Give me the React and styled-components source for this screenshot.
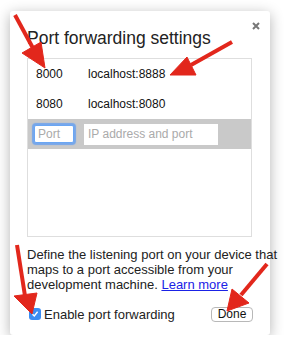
import React from 'react';
import styled, { createGlobalStyle } from 'styled-components';

const GlobalStyle = createGlobalStyle`
  html, body {
    margin: 0;
    background: #ffffff;
  }
  body {
    font-family: "Liberation Sans", Arial, sans-serif;
    color: #222;
  }
`;

const Dialog = styled.div`
  position: relative;
  box-sizing: border-box;
  width: 260px;
  height: 324px;
  margin: 11px 0 0 10px;
  padding: 0 18px 0 17px;
  background: #fff;
  border-radius: 3px;
  box-shadow: 0 3px 14px rgba(0, 0, 0, 0.3);
  display: flex;
  flex-direction: column;
`;

const Header = styled.div`
  display: flex;
  justify-content: space-between;
  align-items: flex-start;
  height: 47px;
`;

const Title = styled.h1`
  margin: 16px 0 0 0;
  font-size: 17.5px;
  line-height: 22px;
  font-weight: normal;
  color: #222;
`;

const CloseButton = styled.button`
  margin: 11px -8px 0 0;
  padding: 0;
  border: none;
  background: none;
  width: 8px;
  height: 8px;
  display: flex;
`;

const RuleList = styled.div`
  box-sizing: border-box;
  height: 179px;
  border: 1px solid #dedede;
  display: flex;
  flex-direction: column;
`;

const RuleRow = styled.div`
  display: grid;
  grid-template-columns: 52px 1fr;
  align-items: center;
  height: 30px;
  padding-left: 8px;
  font-size: 12px;
  color: #111;
`;

const EditRow = styled.div`
  display: flex;
  align-items: center;
  gap: 10px;
  height: 30px;
  padding-left: 6px;
  background: #c9c9c9;
`;

const Field = styled.input`
  box-sizing: border-box;
  width: ${({ $width }) => $width}px;
  height: ${({ $height }) => $height}px;
  padding: 0 0 0 3px;
  font-family: "Liberation Sans", Arial, sans-serif;
  font-size: 12px;
  background: #fff;
  border: ${({ $focused }) => ($focused ? '1px solid #6aa6f3' : '1px solid #fff')};
  box-shadow: ${({ $focused }) => ($focused ? '0 0 1px 2px rgba(90, 155, 245, 0.75)' : 'none')};
  border-radius: ${({ $focused }) => ($focused ? '2px' : '0')};
  outline: none;
  &::placeholder {
    color: #aaa;
  }
`;

const Description = styled.p`
  margin: 10px 0 0 0;
  font-size: 13px;
  line-height: 15px;
  white-space: nowrap;
  color: #222;
`;

const LearnMore = styled.a`
  color: #1a22e6;
  text-decoration: underline;
`;

const Footer = styled.div`
  display: flex;
  align-items: center;
  justify-content: space-between;
  height: 16px;
  margin-top: 14px;
`;

const CheckLabel = styled.label`
  display: flex;
  align-items: center;
  font-size: 13px;
  color: #222;
`;

const CheckBox = styled.span`
  width: 12px;
  height: 12px;
  margin: 0 3px 0 2px;
  border-radius: 3px;
  background: #3b8df3;
  display: flex;
  align-items: center;
  justify-content: center;
`;

const DoneButton = styled.button`
  box-sizing: border-box;
  width: 42px;
  height: 15px;
  margin-right: -1px;
  padding: 0;
  font-family: "Liberation Sans", Arial, sans-serif;
  font-size: 12px;
  line-height: 13px;
  color: #111;
  background: #fff;
  border: 1px solid #b8b8b8;
  border-radius: 4px;
`;

const Annotations = styled.svg`
  position: fixed;
  left: 0;
  top: 0;
  pointer-events: none;
`;

const arrows = [
  { shaft: [15, 15, 34, 50], head: '22,53 41,42 45,68' },
  { shaft: [232, 42, 191, 65], head: '187,57 196,75 170,75' },
  { shaft: [17, 245, 25, 296], head: '14,296 37,293 32,314' },
  { shaft: [267, 264, 241, 295], head: '232,289 249,303 227,311' },
];

const rules = [
  { port: '8000', target: 'localhost:8888' },
  { port: '8080', target: 'localhost:8080' },
];

export default function App() {
  return (
    <>
      <GlobalStyle />
      <Dialog>
        <Header>
          <Title>Port forwarding settings</Title>
          <CloseButton aria-label="Close">
            <svg width="8" height="8" viewBox="0 0 8 8">
              <path d="M1 1 L7 7 M7 1 L1 7" stroke="#777" strokeWidth="2" />
            </svg>
          </CloseButton>
        </Header>
        <RuleList>
          {rules.map((r) => (
            <RuleRow key={r.port}>
              <span>{r.port}</span>
              <span>{r.target}</span>
            </RuleRow>
          ))}
          <EditRow>
            <Field $width={40} $height={18} $focused placeholder="Port" />
            <Field $width={134} $height={21} placeholder="IP address and port" />
          </EditRow>
        </RuleList>
        <Description>
          Define the listening port on your device that
          <br />
          maps to a port accessible from your
          <br />
          development machine. <LearnMore href="#">Learn more</LearnMore>
        </Description>
        <Footer>
          <CheckLabel>
            <CheckBox>
              <svg width="8" height="8" viewBox="0 0 8 8">
                <path d="M1.5 4.2 L3.3 6 L6.6 1.8" stroke="#fff" strokeWidth="1.4" fill="none" />
              </svg>
            </CheckBox>
            Enable port forwarding
          </CheckLabel>
          <DoneButton>Done</DoneButton>
        </Footer>
      </Dialog>
      <Annotations width="295" height="354" viewBox="0 0 295 354">
        {arrows.map((a, i) => (
          <g key={i} fill="#e2271c" stroke="#e2271c">
            <line x1={a.shaft[0]} y1={a.shaft[1]} x2={a.shaft[2]} y2={a.shaft[3]} strokeWidth="4" />
            <polygon points={a.head} strokeWidth="1" strokeLinejoin="round" />
          </g>
        ))}
      </Annotations>
    </>
  );
}
